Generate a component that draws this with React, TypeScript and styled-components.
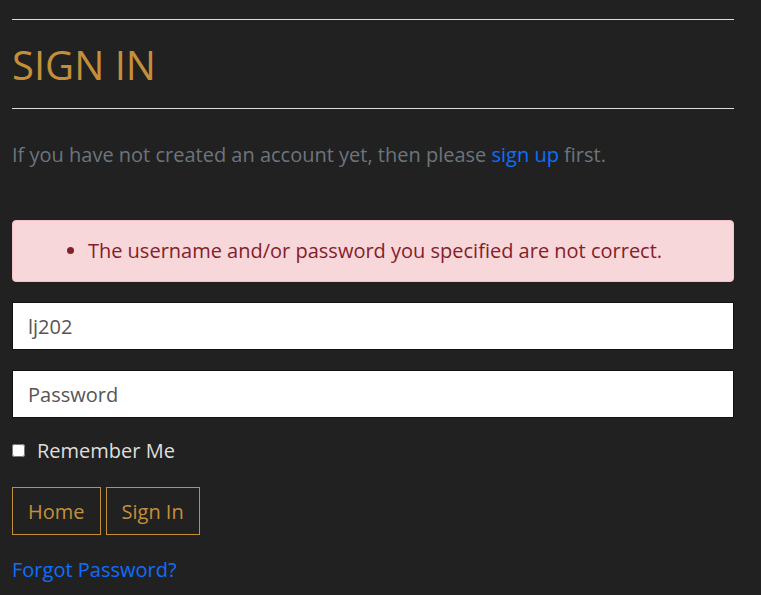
import React from "react";
import styled, { createGlobalStyle } from "styled-components";

const Global = createGlobalStyle`
  html, body { margin: 0; padding: 0; background: #212121; }
  body { font-family: "Open Sans", "Liberation Sans", sans-serif; }
  * { box-sizing: border-box; }
`;

const Page = styled.main`
  width: 722px;
  margin-left: 12px;
  padding-top: 19px;
`;

const Rule = styled.hr`
  margin: 0;
  border: 0;
  height: 1px;
  background: #dcdcdc;
`;

const Title = styled.h1`
  margin: 20px 0 18px;
  font-size: 40px;
  line-height: 50px;
  font-weight: 400;
  color: #c48f3a;
`;

const Lead = styled.p`
  margin: 31px 0 50px;
  font-size: 20px;
  line-height: 30px;
  color: #6c757d;
`;

const Link = styled.a`
  color: #0d6efd;
  text-decoration: none;
`;

const Alert = styled.div`
  display: flex;
  justify-content: center;
  padding: 15px 16px 15px 20px;
  border: 1px solid #f5c2c7;
  border-radius: 4px;
  background: #f8d7da;
  color: #842029;
  font-size: 20px;
  line-height: 30px;
`;

const Errors = styled.ul`
  margin: 0;
  padding: 0;
  li { list-style: disc outside; }
`;

const Input = styled.input`
  display: block;
  width: 100%;
  height: 48px;
  margin-top: 20px;
  padding: 0 15px;
  border: 1px solid #111;
  border-radius: 0;
  background: #fff;
  color: #555;
  font-family: inherit;
  font-size: 20px;
  outline: none;
  &::placeholder { color: #555; opacity: 1; }
`;

const CheckRow = styled.label`
  display: flex;
  align-items: center;
  gap: 12px;
  margin-top: 18px;
  height: 30px;
  color: #dedede;
  font-size: 20px;
  line-height: 30px;
`;

const Check = styled.input`
  margin: 0 0 2px;
  width: 13px;
  height: 13px;
`;

const Buttons = styled.div`
  display: flex;
  gap: 5px;
  margin-top: 21px;
`;

const Button = styled.button`
  height: 48px;
  padding: 0 15px;
  background: transparent;
  border: 1px solid #c48f3a;
  border-radius: 0;
  color: #c48f3a;
  font-family: inherit;
  font-size: 20px;
`;

const Forgot = styled(Link)`
  display: block;
  margin-top: 20px;
  font-size: 20px;
  line-height: 30px;
`;

export default function App() {
  return (
    <>
      <Global />
      <Page>
        <Rule />
        <Title>SIGN IN</Title>
        <Rule />
        <Lead>
          If you have not created an account yet, then please <Link href="#">sign up</Link> first.
        </Lead>
        <Alert>
          <Errors>
            <li>The username and/or password you specified are not correct.</li>
          </Errors>
        </Alert>
        <Input defaultValue="lj202" />
        <Input type="password" placeholder="Password" />
        <CheckRow>
          <Check type="checkbox" />
          Remember Me
        </CheckRow>
        <Buttons>
          <Button>Home</Button>
          <Button>Sign In</Button>
        </Buttons>
        <Forgot href="#">Forgot Password?</Forgot>
      </Page>
    </>
  );
}
